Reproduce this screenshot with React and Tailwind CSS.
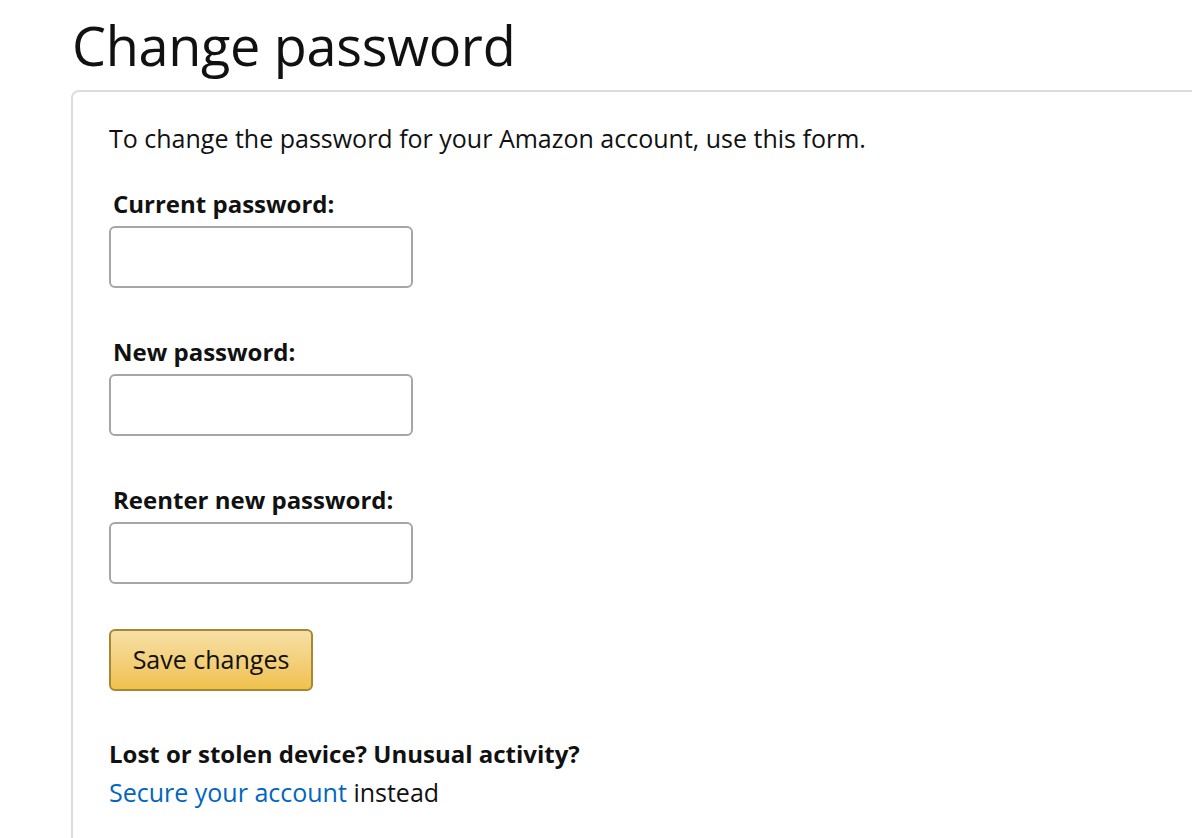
import React from "react";

const fields = ["Current password:", "New password:", "Reenter new password:"];

export default function App() {
  return (
    <div
      className="w-[1192px] h-[838px] overflow-hidden bg-white text-[#111]"
      style={{ fontFamily: '"Open Sans", Arial, sans-serif' }}
    >
      <div className="pl-[71px] pt-[12px]">
        {/* Title */}
        <h1 className="text-[54px] leading-[66px] font-normal pl-[1px] tracking-[-0.3px]">
          Change password
        </h1>

        {/* Form box */}
        <div className="mt-[12px] w-[1200px] border-2 border-[#dddddd] rounded-[8px] pl-[36px] pt-[28px] pb-[40px]">
          <p className="text-[25px] leading-[36px]">
            To change the password for your Amazon account, use this form.
          </p>

          <div className="mt-[31px] flex flex-col gap-[47px]">
            {fields.map((label) => (
              <div key={label} className="flex flex-col">
                <label className="pl-[4px] text-[24px] leading-[34px] font-bold">
                  {label}
                </label>
                <input
                  type="password"
                  className="mt-[5px] w-[304px] h-[62px] border-2 border-[#a6a6a6] rounded-[6px] outline-none"
                />
              </div>
            ))}
          </div>

          <button className="mt-[45px] w-[204px] h-[62px] rounded-[6px] border-2 border-[#a88734] bg-gradient-to-b from-[#f7dfa5] to-[#f0c14b] text-[25px] text-[#111]">
            Save changes
          </button>

          <div className="mt-[43px] leading-[39px]">
            <p className="text-[24px] font-bold">Lost or stolen device? Unusual activity?</p>
            <p className="text-[25px]">
              <a href="#" className="text-[#0066c0]">
                Secure your account
              </a>{" "}
              instead
            </p>
          </div>
        </div>
      </div>
    </div>
  );
}
